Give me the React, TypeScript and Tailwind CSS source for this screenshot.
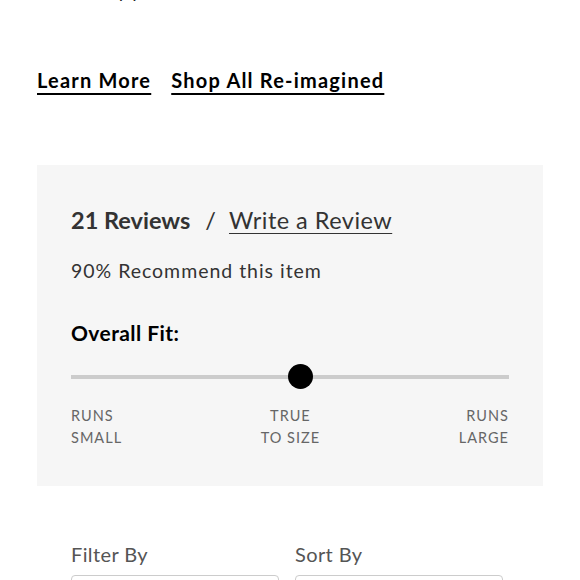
import React from "react";

const font = { fontFamily: "Lato, 'Noto Sans', sans-serif" };

export default function App() {
  return (
    <div className="w-[580px] h-[580px] overflow-hidden bg-white text-[#222]" style={font}>
      <div className="px-[37px]">
        <p className="-mt-[20px] h-[22px] pl-[70px] text-[19px] leading-[22px] text-[#222]">
          by you.
        </p>
        <div className="mt-[66px] flex gap-[20px] text-[20px] font-bold leading-[24px] tracking-[0.06em] text-black">
          <a href="#" className="underline underline-offset-[5px] decoration-2">
            Learn More
          </a>
          <a href="#" className="underline underline-offset-[5px] decoration-2">
            Shop All Re-imagined
          </a>
        </div>

        <section className="mt-[73px] h-[321px] bg-[#f6f6f6] px-[34px] pt-[40px]">
          <div className="flex items-baseline text-[23.5px] leading-[30px] text-[#333]">
            <span className="font-bold">21 Reviews</span>
            <span className="ml-[15px] mr-[13px]">/</span>
            <a href="#" className="underline underline-offset-[4px] decoration-1 tracking-[0.02em]">
              Write a Review
            </a>
          </div>
          <p className="mt-[24px] text-[19.5px] leading-[24px] tracking-[0.05em] text-[#333]">
            90% Recommend this item
          </p>

          <h3 className="mt-[37px] text-[21px] font-bold leading-[26px] tracking-[0.02em] text-black">
            Overall Fit:
          </h3>

          <div className="relative mt-[18px] h-[25px] flex items-center">
            <div className="h-[4px] w-full bg-[#cccccc]" />
            <div className="absolute left-[217px] top-0 h-[25px] w-[25px] rounded-full bg-black" />
          </div>

          <div className="mt-[16px] flex justify-between text-[14.5px] leading-[22px] tracking-[0.07em] text-[#666]">
            <div>
              RUNS
              <br />
              SMALL
            </div>
            <div className="text-center">
              TRUE
              <br />
              TO SIZE
            </div>
            <div className="text-right">
              RUNS
              <br />
              LARGE
            </div>
          </div>
        </section>

        <div className="mt-[55px] flex gap-[16px] pl-[34px]">
          <div className="w-[208px]">
            <label className="block text-[20px] leading-[26px] tracking-[0.02em] text-[#555]">Filter By</label>
            <div className="mt-[8px] h-[40px] rounded-[4px] border border-[#cccccc] bg-white" />
          </div>
          <div className="w-[208px]">
            <label className="block text-[20px] leading-[26px] tracking-[0.02em] text-[#555]">Sort By</label>
            <div className="mt-[8px] h-[40px] rounded-[4px] border border-[#cccccc] bg-white" />
          </div>
        </div>
      </div>
    </div>
  );
}
